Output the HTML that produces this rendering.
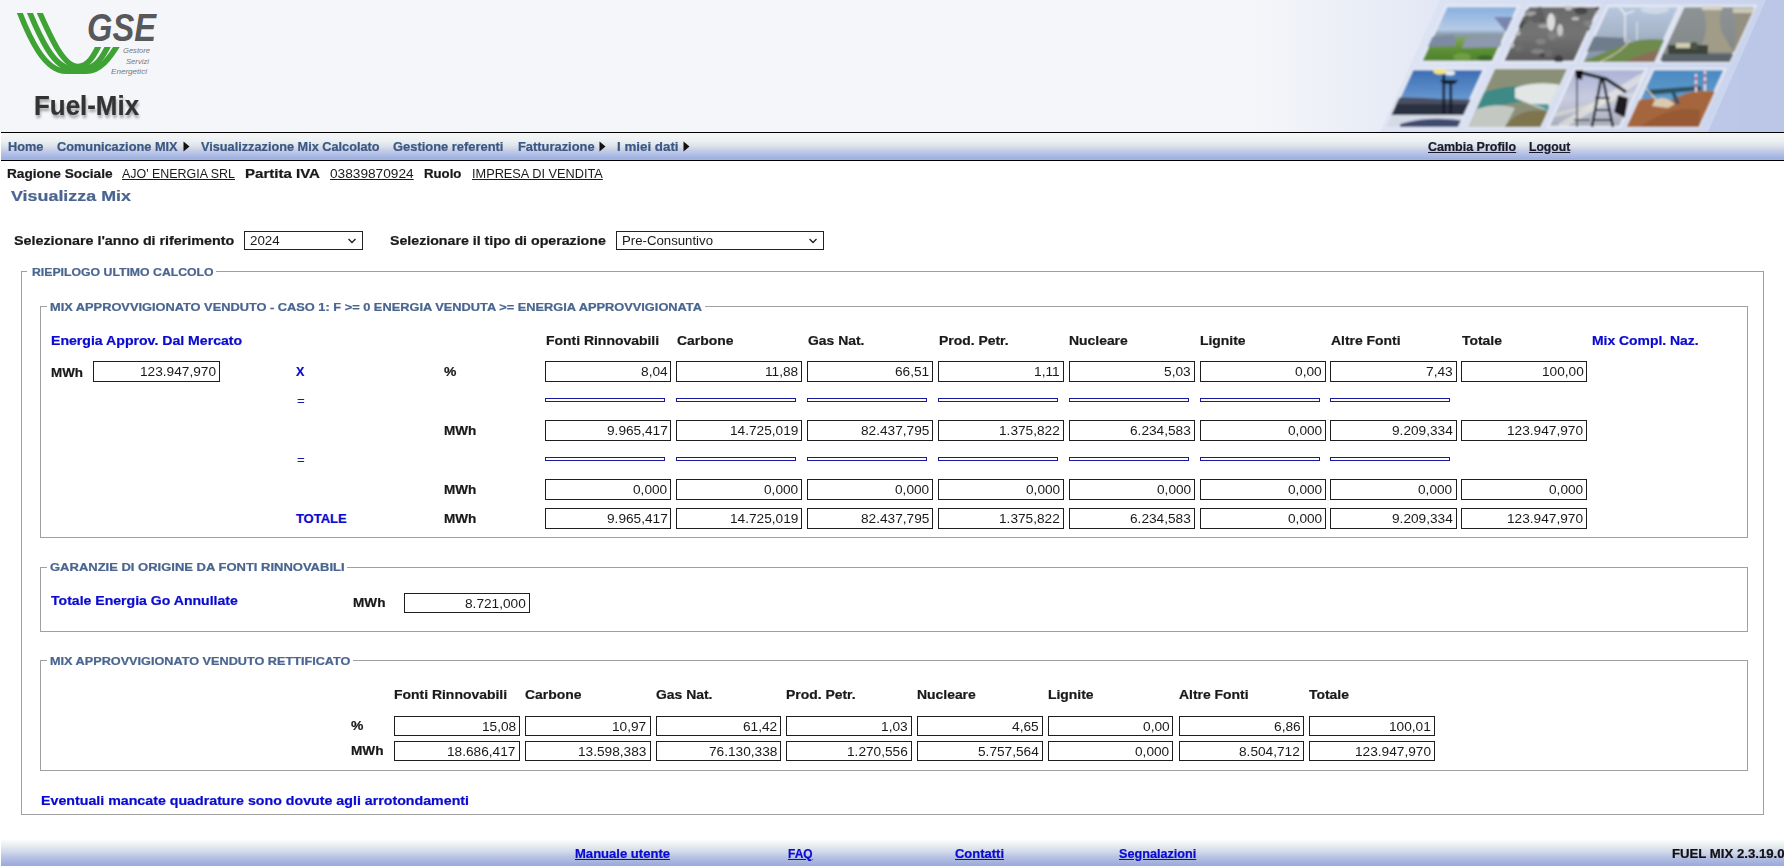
<!DOCTYPE html>
<html><head><meta charset="utf-8"><title>Fuel-Mix</title>
<style>
html,body{margin:0;padding:0;width:1784px;height:866px;overflow:hidden;background:#fff;}
body{position:relative;font-family:"Liberation Sans",sans-serif;}
.t{position:absolute;white-space:nowrap;font-weight:bold;-webkit-text-stroke:0.22px currentColor;}
</style></head><body>
<div style="position:absolute;left:0.00px;top:0.00px;width:1784.00px;height:132.00px;background:#f5f6fa;"></div>
<svg style="position:absolute;left:0;top:0" width="1784" height="132" viewBox="0 0 1784 132">
<defs>
<linearGradient id="hbg" x1="1250" y1="0" x2="1784" y2="0" gradientUnits="userSpaceOnUse"><stop offset="0" stop-color="#f5f6fa"/><stop offset="0.25" stop-color="#e8ecf6"/><stop offset="0.6" stop-color="#d4dcf0"/><stop offset="1" stop-color="#bac6e8"/></linearGradient>
<filter id="bl" x="-10%" y="-10%" width="120%" height="120%"><feGaussianBlur stdDeviation="0.9"/></filter>
<linearGradient id="g0" x1="0" y1="6.0" x2="0" y2="62.0" gradientUnits="userSpaceOnUse"><stop offset="0.00" stop-color="#86aede"/><stop offset="0.42" stop-color="#b6cbe6"/><stop offset="0.50" stop-color="#8e9cb4"/><stop offset="0.62" stop-color="#7aa04a"/><stop offset="0.80" stop-color="#5a8e34"/><stop offset="1.00" stop-color="#4f7e2e"/></linearGradient>
<linearGradient id="g1" x1="0" y1="6.0" x2="0" y2="62.0" gradientUnits="userSpaceOnUse"><stop offset="0.00" stop-color="#6a6a6a"/><stop offset="0.50" stop-color="#747474"/><stop offset="1.00" stop-color="#5a5a5a"/></linearGradient>
<linearGradient id="g2" x1="0" y1="6.0" x2="0" y2="62.0" gradientUnits="userSpaceOnUse"><stop offset="0.00" stop-color="#b8c8e0"/><stop offset="0.50" stop-color="#a6b4c8"/><stop offset="1.00" stop-color="#8090a0"/></linearGradient>
<linearGradient id="g3" x1="0" y1="6.0" x2="0" y2="62.0" gradientUnits="userSpaceOnUse"><stop offset="0.00" stop-color="#8e9496"/><stop offset="0.60" stop-color="#868c8c"/><stop offset="1.00" stop-color="#7a8080"/></linearGradient>
<linearGradient id="g4" x1="0" y1="69.0" x2="0" y2="127.0" gradientUnits="userSpaceOnUse"><stop offset="0.00" stop-color="#3a6cb2"/><stop offset="0.55" stop-color="#6a9ad2"/><stop offset="1.00" stop-color="#7aa4d4"/></linearGradient>
<linearGradient id="g5" x1="0" y1="69.0" x2="0" y2="127.0" gradientUnits="userSpaceOnUse"><stop offset="0.00" stop-color="#6c7468"/><stop offset="0.30" stop-color="#8a9282"/><stop offset="0.45" stop-color="#3e8a88"/><stop offset="0.60" stop-color="#d4dad6"/><stop offset="0.75" stop-color="#8a8c72"/><stop offset="1.00" stop-color="#6c7048"/></linearGradient>
<linearGradient id="g6" x1="0" y1="69.0" x2="0" y2="127.0" gradientUnits="userSpaceOnUse"><stop offset="0.00" stop-color="#aab2d4"/><stop offset="0.50" stop-color="#c8cce0"/><stop offset="1.00" stop-color="#a8acb8"/></linearGradient>
<linearGradient id="g7" x1="0" y1="69.0" x2="0" y2="127.0" gradientUnits="userSpaceOnUse"><stop offset="0.00" stop-color="#4a88c2"/><stop offset="0.60" stop-color="#62a0cc"/><stop offset="1.00" stop-color="#70a8d0"/></linearGradient>
<radialGradient id="coal" cx="1555" cy="30" r="30" gradientUnits="userSpaceOnUse"><stop offset="0" stop-color="#cfcfcf"/><stop offset="0.5" stop-color="#8a8a8a"/><stop offset="1" stop-color="#5a5a5a" stop-opacity="0"/></radialGradient>
<clipPath id="c0"><polygon points="1446.6,6.0 1518.6,6.0 1492.8,62.0 1420.8,62.0"/></clipPath>
<clipPath id="c1"><polygon points="1528.3,6.0 1600.3,6.0 1574.5,62.0 1502.5,62.0"/></clipPath>
<clipPath id="c2"><polygon points="1607.9,6.0 1679.9,6.0 1654.1,62.0 1582.1,62.0"/></clipPath>
<clipPath id="c3"><polygon points="1683.5,6.0 1755.5,6.0 1729.7,62.0 1657.7,62.0"/></clipPath>
<clipPath id="c4"><polygon points="1412.5,69.0 1484.5,69.0 1457.8,127.0 1385.8,127.0"/></clipPath>
<clipPath id="c5"><polygon points="1495.0,69.0 1567.0,69.0 1540.3,127.0 1468.3,127.0"/></clipPath>
<clipPath id="c6"><polygon points="1574.7,69.0 1646.7,69.0 1620.0,127.0 1548.0,127.0"/></clipPath>
<clipPath id="c7"><polygon points="1653.3,69.0 1725.3,69.0 1698.6,127.0 1626.6,127.0"/></clipPath>
</defs>
<rect x="1250" y="0" width="534" height="132" fill="url(#hbg)"/>
<polygon points="1440,0 1784,0 1784,132 1380,132" fill="#d6def2" opacity="0.5"/>
<polygon points="1766,0 1784,0 1784,132 1708,132" fill="#b6c2e6" opacity="0.7"/>
<g filter="url(#bl)">
<polygon points="1446.6,6.0 1518.6,6.0 1492.8,62.0 1420.8,62.0" fill="url(#g0)" stroke="#e4e8f4" stroke-width="2.5"/>
<polygon points="1528.3,6.0 1600.3,6.0 1574.5,62.0 1502.5,62.0" fill="url(#g1)" stroke="#e4e8f4" stroke-width="2.5"/>
<polygon points="1607.9,6.0 1679.9,6.0 1654.1,62.0 1582.1,62.0" fill="url(#g2)" stroke="#e4e8f4" stroke-width="2.5"/>
<polygon points="1683.5,6.0 1755.5,6.0 1729.7,62.0 1657.7,62.0" fill="url(#g3)" stroke="#e4e8f4" stroke-width="2.5"/>
<polygon points="1412.5,69.0 1484.5,69.0 1457.8,127.0 1385.8,127.0" fill="url(#g4)" stroke="#e4e8f4" stroke-width="2.5"/>
<polygon points="1495.0,69.0 1567.0,69.0 1540.3,127.0 1468.3,127.0" fill="url(#g5)" stroke="#e4e8f4" stroke-width="2.5"/>
<polygon points="1574.7,69.0 1646.7,69.0 1620.0,127.0 1548.0,127.0" fill="url(#g6)" stroke="#e4e8f4" stroke-width="2.5"/>
<polygon points="1653.3,69.0 1725.3,69.0 1698.6,127.0 1626.6,127.0" fill="url(#g7)" stroke="#e4e8f4" stroke-width="2.5"/>
<g clip-path="url(#c0)"><polygon points="1428,37 1454,35 1456,46 1424,47" fill="#7e8aa2"/><polygon points="1466,38 1500,36 1502,47 1462,48" fill="#8e98ae"/><polygon points="1494,17 1513,17 1506,32" fill="#7a86ae"/><ellipse cx="1462" cy="57" rx="9" ry="4" fill="#7aa84a" opacity="0.7"/><ellipse cx="1485" cy="58" rx="8" ry="3" fill="#2e5a20" opacity="0.6"/></g>
<g clip-path="url(#c1)"><ellipse cx="1535.8" cy="14.4" rx="2.4" ry="3.1" fill="rgb(60,60,60)"/><ellipse cx="1539.7" cy="9.2" rx="2.2" ry="2.8" fill="rgb(95,95,95)"/><ellipse cx="1511.6" cy="11.1" rx="2.3" ry="3.2" fill="rgb(160,160,160)"/><ellipse cx="1595.0" cy="41.3" rx="4.9" ry="2.7" fill="rgb(60,60,60)"/><ellipse cx="1597.7" cy="8.6" rx="3.4" ry="1.9" fill="rgb(80,80,80)"/><ellipse cx="1516.2" cy="23.3" rx="2.5" ry="3.2" fill="rgb(80,80,80)"/><ellipse cx="1522.8" cy="11.5" rx="4.8" ry="3.4" fill="rgb(70,70,70)"/><ellipse cx="1552.2" cy="35.8" rx="4.3" ry="4.3" fill="rgb(130,130,130)"/><ellipse cx="1539.4" cy="19.9" rx="5.5" ry="2.2" fill="rgb(80,80,80)"/><ellipse cx="1559.6" cy="35.4" rx="5.6" ry="2.4" fill="rgb(130,130,130)"/><ellipse cx="1598.1" cy="12.6" rx="2.8" ry="2.5" fill="rgb(160,160,160)"/><ellipse cx="1593.7" cy="29.6" rx="5.8" ry="3.2" fill="rgb(70,70,70)"/><ellipse cx="1588.2" cy="23.6" rx="5.0" ry="3.2" fill="rgb(130,130,130)"/><ellipse cx="1548.3" cy="53.0" rx="4.4" ry="3.5" fill="rgb(110,110,110)"/><ellipse cx="1510.8" cy="45.3" rx="3.4" ry="2.7" fill="rgb(190,190,190)"/><ellipse cx="1568.5" cy="7.3" rx="3.8" ry="3.3" fill="rgb(190,190,190)"/><ellipse cx="1551.9" cy="18.2" rx="2.6" ry="2.2" fill="rgb(110,110,110)"/><ellipse cx="1542.1" cy="54.8" rx="2.8" ry="2.7" fill="rgb(70,70,70)"/><ellipse cx="1531.4" cy="13.7" rx="6.3" ry="2.3" fill="rgb(160,160,160)"/><ellipse cx="1544.5" cy="26.1" rx="6.8" ry="2.0" fill="rgb(160,160,160)"/><ellipse cx="1521.7" cy="19.0" rx="2.1" ry="4.0" fill="rgb(95,95,95)"/><ellipse cx="1522.3" cy="21.8" rx="4.1" ry="2.6" fill="rgb(80,80,80)"/><ellipse cx="1558.8" cy="59.4" rx="4.3" ry="4.1" fill="rgb(60,60,60)"/><ellipse cx="1595.4" cy="44.1" rx="4.0" ry="2.7" fill="rgb(160,160,160)"/><ellipse cx="1550.7" cy="28.4" rx="2.3" ry="2.1" fill="rgb(95,95,95)"/><ellipse cx="1520.4" cy="25.0" rx="2.5" ry="3.2" fill="rgb(60,60,60)"/><ellipse cx="1556.0" cy="59.1" rx="2.4" ry="2.1" fill="rgb(60,60,60)"/><ellipse cx="1540.7" cy="41.5" rx="5.0" ry="2.9" fill="rgb(130,130,130)"/><ellipse cx="1516.0" cy="33.3" rx="4.4" ry="2.4" fill="rgb(190,190,190)"/><ellipse cx="1518.7" cy="48.0" rx="4.4" ry="3.6" fill="rgb(110,110,110)"/><ellipse cx="1554.1" cy="17.5" rx="2.7" ry="3.1" fill="rgb(130,130,130)"/><ellipse cx="1507.6" cy="35.6" rx="5.5" ry="2.3" fill="rgb(70,70,70)"/><ellipse cx="1539.8" cy="15.4" rx="4.7" ry="3.8" fill="rgb(95,95,95)"/><ellipse cx="1536.3" cy="18.5" rx="6.0" ry="4.0" fill="rgb(95,95,95)"/><ellipse cx="1575.3" cy="18.7" rx="3.8" ry="1.6" fill="rgb(190,190,190)"/><ellipse cx="1507.7" cy="21.6" rx="3.0" ry="3.3" fill="rgb(110,110,110)"/><ellipse cx="1537.7" cy="51.3" rx="6.8" ry="2.6" fill="rgb(130,130,130)"/><ellipse cx="1525.9" cy="18.7" rx="3.7" ry="2.9" fill="rgb(95,95,95)"/><ellipse cx="1598.6" cy="40.2" rx="4.4" ry="3.5" fill="rgb(60,60,60)"/><ellipse cx="1581.0" cy="10.7" rx="6.5" ry="3.8" fill="rgb(70,70,70)"/><ellipse cx="1551" cy="22" rx="4" ry="9" fill="#dcdcdc"/><ellipse cx="1560" cy="30" rx="3" ry="6" fill="#c8c8c8"/></g>
<g clip-path="url(#c2)"><ellipse cx="1655" cy="10" rx="14" ry="4" fill="#dfe6ee" opacity="0.6"/><polygon points="1580,36 1625,38 1625,50 1580,52" fill="#6e7c8c"/><path d="M1582,62 L1605,52 C1620,46 1630,42 1640,40 C1655,38 1668,40 1680,42 L1680,62 Z" fill="#6e8a4e"/><path d="M1625,62 C1645,52 1660,48 1680,50 L1680,62Z" fill="#8a6e5a"/><path d="M1600,62 C1615,55 1625,48 1630,40" stroke="#d8d0c0" stroke-width="1.2" fill="none"/></g>
<g clip-path="url(#c2)" stroke="#f4f6f8" stroke-width="1.2"><line x1="1625" y1="14" x2="1625" y2="42"/><line x1="1625" y1="14" x2="1620" y2="8"/><line x1="1625" y1="14" x2="1634" y2="11"/><line x1="1637" y1="22" x2="1637" y2="40" stroke-width="0.9"/></g>
<g clip-path="url(#c3)"><path d="M1703,7 L1721,7 C1719,18 1719,28 1724,36 C1728,42 1731,48 1733,52 L1699,52 C1702,44 1706,36 1706,28 C1706,20 1705,12 1703,7Z" fill="#a09c88"/><path d="M1734,11 L1755,11 C1752,22 1750,30 1750,38 C1750,44 1746,50 1745,52 L1731,52 C1734,44 1737,36 1736,28 C1736,20 1735,15 1734,11Z" fill="#948f7e"/><rect x="1702" y="5" width="20" height="5" fill="#d4d2c4"/><rect x="1733" y="8" width="22" height="5" fill="#ccc8b8"/><rect x="1668" y="45" width="40" height="9" fill="#3c443a"/><rect x="1676" y="43" width="14" height="5" fill="#d0ccb0"/><ellipse cx="1694" cy="46" rx="4" ry="4" fill="#4a5248"/><rect x="1662" y="54" width="80" height="8" fill="#5a646a"/></g>
<g clip-path="url(#c4)"><rect x="1380" y="100" width="110" height="15" fill="#2c3242"/><path d="M1380,100 C1400,96 1420,98 1440,99 L1490,100 L1490,104 L1380,104Z" fill="#4a5060"/><rect x="1380" y="115" width="110" height="13" fill="#d4dae6"/><path d="M1400,124 C1420,118 1445,117 1470,122 L1470,127 L1400,127Z" fill="#404c70"/><rect x="1442.5" y="74" width="2.6" height="40" fill="#141a26"/><rect x="1449.5" y="82" width="2.6" height="32" fill="#141a26"/><path d="M1440,80 L1458,80 L1455,84 L1443,84Z" fill="#141a26"/><ellipse cx="1440" cy="71" rx="7" ry="3.5" fill="#f0e488"/><ellipse cx="1450" cy="73" rx="5" ry="2.5" fill="#e8ecf0"/></g>
<g clip-path="url(#c5)"><rect x="1460" y="69" width="110" height="60" fill="#8a9078"/><path d="M1470,98 C1490,88 1515,84 1545,86 L1545,100 C1520,100 1495,106 1470,114Z" fill="#3e8a86"/><path d="M1515,88 C1530,82 1550,82 1565,86 L1560,112 C1545,112 1530,104 1515,98Z" fill="#e2e6e4"/><path d="M1469,112 C1490,104 1500,104 1515,108 L1505,127 L1469,127Z" fill="#c4c8c2"/><path d="M1505,127 C1515,112 1530,108 1550,112 L1545,127Z" fill="#7e7450"/><path d="M1530,104 C1540,106 1548,110 1552,114 L1548,104Z" fill="#4a9aa0"/></g>
<g clip-path="url(#c6)"><path d="M1560,127 L1650,72" stroke="#f4f2ea" stroke-width="7" opacity="0.55"/><path d="M1555,115 L1650,90" stroke="#e8e4d4" stroke-width="4" opacity="0.5"/><g fill="none" stroke="#111418"><path d="M1578,72 L1606,79 L1626,92" stroke-width="3.2"/><path d="M1601,79 L1592,127" stroke-width="2.4"/><path d="M1603,79 L1613,127" stroke-width="2.4"/><path d="M1595,98 L1610,98 M1594,110 L1611,110 M1593,120 L1612,120" stroke-width="1.3"/><path d="M1577,76 L1577,127" stroke-width="1"/><path d="M1574,120 L1590,120" stroke-width="1"/></g><path d="M1575,70 L1583,70 L1582,80 L1576,78Z" fill="#111"/><path d="M1618,95 L1628,98 L1625,118 L1614,112Z" fill="#1a1c22"/></g>
<g clip-path="url(#c7)"><path d="M1615,127 L1628,104 C1640,98 1655,96 1668,102 C1685,92 1700,88 1716,92 L1716,127Z" fill="#a6663e"/><path d="M1640,127 C1660,112 1680,106 1700,110 L1700,127Z" fill="#8e5230" opacity="0.6"/><path d="M1645,90 L1700,86 L1702,90 L1650,95Z" fill="#2e5060"/><path d="M1670,90 L1676,104 L1680,104 L1674,90Z" fill="#2e5060"/><path d="M1642,84 L1660,104 L1668,104" stroke="#d8d2c4" stroke-width="1.5" fill="none"/><path d="M1655,100 C1662,96 1668,98 1675,104 L1668,108 L1652,106Z" fill="#dccab0"/><rect x="1695" y="74" width="2" height="18" fill="#e8e0e0"/><rect x="1695" y="77" width="2" height="3" fill="#c84040"/><rect x="1695" y="84" width="2" height="3" fill="#c84040"/><rect x="1704" y="71" width="2" height="20" fill="#e8e0e0"/><rect x="1704" y="74" width="2" height="3" fill="#c84040"/><rect x="1704" y="81" width="2" height="3" fill="#c84040"/></g>
</g>
</svg>
<svg style="position:absolute;left:0;top:0" width="180" height="131" viewBox="0 0 180 131">
<defs><clipPath id="lc"><path d="M0,13 H86 V47 H180 V131 H0 Z"/></clipPath></defs>
<g fill="none" stroke="#3ea334" stroke-width="5.6" stroke-linecap="butt" clip-path="url(#lc)">
<path d="M17.5,7 C30,40 45,71.3 66,71.3 L 86,71.3 C 100,71.3 110,58 119.5,42"/>
<path d="M27.5,7 C40,38 54,68.5 72,68.5 L 84,68.5 C 96,68.5 103,57 110,42"/>
<path d="M37.2,7 C50,36 63,66.5 78,66.5 C 88,66.5 94,56 100.5,42"/>
</g>
<text x="87" y="40.5" font-family="Liberation Sans" font-weight="bold" font-style="italic" font-size="39" fill="#58585a" textLength="69" lengthAdjust="spacingAndGlyphs">GSE</text>
<text x="123" y="53" font-family="Liberation Sans" font-style="italic" font-size="7.5" fill="#777" textLength="27" lengthAdjust="spacingAndGlyphs">Gestore</text>
<text x="126" y="64" font-family="Liberation Sans" font-style="italic" font-size="7.5" fill="#777" textLength="23" lengthAdjust="spacingAndGlyphs">Servizi</text>
<text x="111" y="74" font-family="Liberation Sans" font-style="italic" font-size="7.5" fill="#777" textLength="36" lengthAdjust="spacingAndGlyphs">Energetici</text>
</svg>
<div class="t" style="top:91.64px;font-size:27.50px;line-height:27.50px;color:#333333;left:34.00px;transform:scaleX(0.9417);transform-origin:0 0;text-shadow:1px 3px 3px rgba(0,0,0,0.35);">Fuel-Mix</div>
<div style="position:absolute;left:1.00px;top:132.00px;width:1783.00px;height:1.00px;background:#000;"></div>
<div style="position:absolute;left:1.00px;top:133.00px;width:1783.00px;height:27.00px;background:linear-gradient(180deg,#f6f7f9 0%,#eef2f3 25%,#dce3ea 48%,#c4cce8 65%,#b0bee6 80%,#9cb0de 96%,#aab8e8 100%);"></div>
<div style="position:absolute;left:1.00px;top:160.00px;width:1783.00px;height:1.00px;background:#000;"></div>
<div class="t" style="top:139.94px;font-size:13.00px;line-height:13.00px;color:#3b5783;left:8.00px;transform:scaleX(0.9806);transform-origin:0 0;">Home</div>
<div class="t" style="top:139.94px;font-size:13.00px;line-height:13.00px;color:#3b5783;left:57.00px;transform:scaleX(0.9821);transform-origin:0 0;">Comunicazione MIX</div>
<div class="t" style="top:139.94px;font-size:13.00px;line-height:13.00px;color:#3b5783;left:200.80px;transform:scaleX(0.9781);transform-origin:0 0;">Visualizzazione Mix Calcolato</div>
<div class="t" style="top:139.94px;font-size:13.00px;line-height:13.00px;color:#3b5783;left:392.90px;transform:scaleX(0.9928);transform-origin:0 0;">Gestione referenti</div>
<div class="t" style="top:139.94px;font-size:13.00px;line-height:13.00px;color:#3b5783;left:517.60px;transform:scaleX(0.9909);transform-origin:0 0;">Fatturazione</div>
<div class="t" style="top:139.94px;font-size:13.00px;line-height:13.00px;color:#3b5783;left:617.40px;transform:scaleX(1.0267);transform-origin:0 0;">I miei dati</div>
<svg style="position:absolute;left:182.6px;top:141px" width="8" height="11"><path d="M0.5,0.5 L6.5,5.5 L0.5,10.5 Z" fill="#111"/></svg>
<svg style="position:absolute;left:599.3px;top:141px" width="8" height="11"><path d="M0.5,0.5 L6.5,5.5 L0.5,10.5 Z" fill="#111"/></svg>
<svg style="position:absolute;left:683.0px;top:141px" width="8" height="11"><path d="M0.5,0.5 L6.5,5.5 L0.5,10.5 Z" fill="#111"/></svg>
<div class="t" style="top:139.64px;font-size:13.00px;line-height:13.00px;color:#1a1a2a;text-decoration:underline;left:1427.80px;transform:scaleX(0.9607);transform-origin:0 0;">Cambia Profilo</div>
<div class="t" style="top:139.64px;font-size:13.00px;line-height:13.00px;color:#1a1a2a;text-decoration:underline;left:1528.80px;transform:scaleX(0.9364);transform-origin:0 0;">Logout</div>
<div class="t" style="top:166.74px;font-size:13.00px;line-height:13.00px;color:#1a1a1a;left:6.50px;transform:scaleX(1.0508);transform-origin:0 0;">Ragione Sociale</div>
<div class="t" style="top:166.74px;font-size:13.00px;line-height:13.00px;font-weight:normal;-webkit-text-stroke:0;color:#1a1a1a;text-decoration:underline;left:122.00px;transform:scaleX(0.9568);transform-origin:0 0;">AJO&#x27; ENERGIA SRL</div>
<div class="t" style="top:166.74px;font-size:13.00px;line-height:13.00px;color:#1a1a1a;left:245.00px;transform:scaleX(1.1574);transform-origin:0 0;">Partita IVA</div>
<div class="t" style="top:166.74px;font-size:13.00px;line-height:13.00px;font-weight:normal;-webkit-text-stroke:0;color:#1a1a1a;text-decoration:underline;left:330.00px;transform:scaleX(1.0516);transform-origin:0 0;">03839870924</div>
<div class="t" style="top:166.74px;font-size:13.00px;line-height:13.00px;color:#1a1a1a;left:424.30px;transform:scaleX(1.0163);transform-origin:0 0;">Ruolo</div>
<div class="t" style="top:166.74px;font-size:13.00px;line-height:13.00px;font-weight:normal;-webkit-text-stroke:0;color:#1a1a1a;text-decoration:underline;left:472.20px;transform:scaleX(0.9805);transform-origin:0 0;">IMPRESA DI VENDITA</div>
<div class="t" style="top:188.34px;font-size:15.50px;line-height:15.50px;color:#4a6590;left:11.00px;transform:scaleX(1.1538);transform-origin:0 0;">Visualizza Mix</div>
<div class="t" style="top:233.94px;font-size:13.00px;line-height:13.00px;color:#1a1a1a;left:14.10px;transform:scaleX(1.0994);transform-origin:0 0;">Selezionare l&#x27;anno di riferimento</div>
<div style="position:absolute;left:244.00px;top:231.00px;width:119.00px;height:19.00px;border:1px solid #222;box-sizing:border-box;background:#fff;"></div>
<div class="t" style="top:234.44px;font-size:13.00px;line-height:13.00px;font-weight:normal;-webkit-text-stroke:0;color:#1a1a1a;left:250.30px;transform:scaleX(1.0277);transform-origin:0 0;">2024</div>
<div class="t" style="top:233.94px;font-size:13.00px;line-height:13.00px;color:#1a1a1a;left:390.30px;transform:scaleX(1.0904);transform-origin:0 0;">Selezionare il tipo di operazione</div>
<div style="position:absolute;left:616.00px;top:231.00px;width:208.00px;height:19.00px;border:1px solid #222;box-sizing:border-box;background:#fff;"></div>
<div class="t" style="top:234.44px;font-size:13.00px;line-height:13.00px;font-weight:normal;-webkit-text-stroke:0;color:#1a1a1a;left:622.40px;transform:scaleX(1.0156);transform-origin:0 0;">Pre-Consuntivo</div>
<svg style="position:absolute;left:346.5px;top:237px" width="10" height="8"><path d="M1.5,2 L5,5.5 L8.5,2" fill="none" stroke="#222" stroke-width="1.4"/></svg>
<svg style="position:absolute;left:807.8px;top:237px" width="10" height="8"><path d="M1.5,2 L5,5.5 L8.5,2" fill="none" stroke="#222" stroke-width="1.4"/></svg>
<div style="position:absolute;left:21.00px;top:271.00px;width:1.00px;height:544.00px;background:#a0a0a0;"></div>
<div style="position:absolute;left:1763.00px;top:271.00px;width:1.00px;height:544.00px;background:#a0a0a0;"></div>
<div style="position:absolute;left:21.00px;top:814.00px;width:1743.00px;height:1.00px;background:#a0a0a0;"></div>
<div style="position:absolute;left:21.00px;top:271.00px;width:6.00px;height:1.00px;background:#a0a0a0;"></div>
<div style="position:absolute;left:216.00px;top:271.00px;width:1548.00px;height:1.00px;background:#a0a0a0;"></div>
<div class="t" style="top:267.46px;font-size:11.00px;line-height:11.00px;color:#4a6590;left:31.80px;transform:scaleX(1.1147);transform-origin:0 0;">RIEPILOGO ULTIMO CALCOLO</div>
<div style="position:absolute;left:40.00px;top:306.00px;width:1.00px;height:232.00px;background:#a0a0a0;"></div>
<div style="position:absolute;left:1747.00px;top:306.00px;width:1.00px;height:232.00px;background:#a0a0a0;"></div>
<div style="position:absolute;left:40.00px;top:537.00px;width:1708.00px;height:1.00px;background:#a0a0a0;"></div>
<div style="position:absolute;left:40.00px;top:306.00px;width:6.50px;height:1.00px;background:#a0a0a0;"></div>
<div style="position:absolute;left:705.00px;top:306.00px;width:1043.00px;height:1.00px;background:#a0a0a0;"></div>
<div class="t" style="top:301.66px;font-size:11.00px;line-height:11.00px;color:#4a6590;left:50.00px;transform:scaleX(1.1637);transform-origin:0 0;">MIX APPROVVIGIONATO VENDUTO - CASO 1: F &gt;= 0 ENERGIA VENDUTA &gt;= ENERGIA APPROVVIGIONATA</div>
<div style="position:absolute;left:40.00px;top:567.00px;width:1.00px;height:65.00px;background:#a0a0a0;"></div>
<div style="position:absolute;left:1747.00px;top:567.00px;width:1.00px;height:65.00px;background:#a0a0a0;"></div>
<div style="position:absolute;left:40.00px;top:631.00px;width:1708.00px;height:1.00px;background:#a0a0a0;"></div>
<div style="position:absolute;left:40.00px;top:567.00px;width:6.50px;height:1.00px;background:#a0a0a0;"></div>
<div style="position:absolute;left:347.00px;top:567.00px;width:1401.00px;height:1.00px;background:#a0a0a0;"></div>
<div class="t" style="top:562.26px;font-size:11.00px;line-height:11.00px;color:#4a6590;left:50.30px;transform:scaleX(1.1813);transform-origin:0 0;">GARANZIE DI ORIGINE DA FONTI RINNOVABILI</div>
<div style="position:absolute;left:40.00px;top:660.00px;width:1.00px;height:111.00px;background:#a0a0a0;"></div>
<div style="position:absolute;left:1747.00px;top:660.00px;width:1.00px;height:111.00px;background:#a0a0a0;"></div>
<div style="position:absolute;left:40.00px;top:770.00px;width:1708.00px;height:1.00px;background:#a0a0a0;"></div>
<div style="position:absolute;left:40.00px;top:660.00px;width:6.50px;height:1.00px;background:#a0a0a0;"></div>
<div style="position:absolute;left:353.00px;top:660.00px;width:1395.00px;height:1.00px;background:#a0a0a0;"></div>
<div class="t" style="top:656.36px;font-size:11.00px;line-height:11.00px;color:#4a6590;left:50.30px;transform:scaleX(1.1522);transform-origin:0 0;">MIX APPROVVIGIONATO VENDUTO RETTIFICATO</div>
<div class="t" style="top:334.14px;font-size:13.00px;line-height:13.00px;color:#0a0ad0;left:51.10px;transform:scaleX(1.0845);transform-origin:0 0;">Energia Approv. Dal Mercato</div>
<div class="t" style="top:333.94px;font-size:13.00px;line-height:13.00px;color:#1a1a1a;left:546.00px;transform:scaleX(1.0721);transform-origin:0 0;">Fonti Rinnovabili</div>
<div class="t" style="top:333.94px;font-size:13.00px;line-height:13.00px;color:#1a1a1a;left:676.85px;transform:scaleX(1.0700);transform-origin:0 0;">Carbone</div>
<div class="t" style="top:333.94px;font-size:13.00px;line-height:13.00px;color:#1a1a1a;left:807.70px;transform:scaleX(1.0700);transform-origin:0 0;">Gas Nat.</div>
<div class="t" style="top:333.94px;font-size:13.00px;line-height:13.00px;color:#1a1a1a;left:938.55px;transform:scaleX(1.0700);transform-origin:0 0;">Prod. Petr.</div>
<div class="t" style="top:333.94px;font-size:13.00px;line-height:13.00px;color:#1a1a1a;left:1069.40px;transform:scaleX(1.0700);transform-origin:0 0;">Nucleare</div>
<div class="t" style="top:333.94px;font-size:13.00px;line-height:13.00px;color:#1a1a1a;left:1200.25px;transform:scaleX(1.0700);transform-origin:0 0;">Lignite</div>
<div class="t" style="top:333.94px;font-size:13.00px;line-height:13.00px;color:#1a1a1a;left:1331.10px;transform:scaleX(1.0700);transform-origin:0 0;">Altre Fonti</div>
<div class="t" style="top:333.94px;font-size:13.00px;line-height:13.00px;color:#1a1a1a;left:1461.95px;transform:scaleX(1.0700);transform-origin:0 0;">Totale</div>
<div class="t" style="top:333.94px;font-size:13.00px;line-height:13.00px;color:#0a0ad0;left:1592.00px;transform:scaleX(1.0700);transform-origin:0 0;">Mix Compl. Naz.</div>
<div class="t" style="top:365.64px;font-size:13.00px;line-height:13.00px;color:#1a1a1a;left:51.10px;transform:scaleX(1.0290);transform-origin:0 0;">MWh</div>
<div style="position:absolute;left:93.00px;top:361.00px;width:127.00px;height:21.00px;border:1px solid #1e1e1e;box-sizing:border-box;background:#fff;"></div>
<div class="t" style="top:366.17px;font-size:12.20px;line-height:12.20px;font-weight:normal;-webkit-text-stroke:0;color:#1a1a1a;left:139.96px;transform:scaleX(1.1215);transform-origin:0 0;">123.947,970</div>
<div class="t" style="top:364.94px;font-size:13.00px;line-height:13.00px;color:#0a0ad0;left:295.80px;transform:scaleX(0.9655);transform-origin:0 0;">X</div>
<div class="t" style="top:364.94px;font-size:13.00px;line-height:13.00px;color:#1a1a1a;left:443.60px;transform:scaleX(1.0700);transform-origin:0 0;">%</div>
<div style="position:absolute;left:545.30px;top:361.00px;width:126.20px;height:21.00px;border:1px solid #1e1e1e;box-sizing:border-box;background:#fff;"></div>
<div class="t" style="top:366.17px;font-size:12.20px;line-height:12.20px;font-weight:normal;-webkit-text-stroke:0;color:#1a1a1a;left:640.82px;transform:scaleX(1.1256);transform-origin:0 0;">8,04</div>
<div style="position:absolute;left:545.30px;top:420.00px;width:126.20px;height:21.00px;border:1px solid #1e1e1e;box-sizing:border-box;background:#fff;"></div>
<div class="t" style="top:425.17px;font-size:12.20px;line-height:12.20px;font-weight:normal;-webkit-text-stroke:0;color:#1a1a1a;left:606.62px;transform:scaleX(1.1211);transform-origin:0 0;">9.965,417</div>
<div style="position:absolute;left:545.30px;top:479.00px;width:126.20px;height:20.50px;border:1px solid #1e1e1e;box-sizing:border-box;background:#fff;"></div>
<div class="t" style="top:483.92px;font-size:12.20px;line-height:12.20px;font-weight:normal;-webkit-text-stroke:0;color:#1a1a1a;left:633.30px;transform:scaleX(1.1213);transform-origin:0 0;">0,000</div>
<div style="position:absolute;left:545.30px;top:508.00px;width:126.20px;height:21.00px;border:1px solid #1e1e1e;box-sizing:border-box;background:#fff;"></div>
<div class="t" style="top:513.17px;font-size:12.20px;line-height:12.20px;font-weight:normal;-webkit-text-stroke:0;color:#1a1a1a;left:606.62px;transform:scaleX(1.1211);transform-origin:0 0;">9.965,417</div>
<div style="position:absolute;left:676.15px;top:361.00px;width:126.20px;height:21.00px;border:1px solid #1e1e1e;box-sizing:border-box;background:#fff;"></div>
<div class="t" style="top:366.17px;font-size:12.20px;line-height:12.20px;font-weight:normal;-webkit-text-stroke:0;color:#1a1a1a;left:765.18px;transform:scaleX(1.1207);transform-origin:0 0;">11,88</div>
<div style="position:absolute;left:676.15px;top:420.00px;width:126.20px;height:21.00px;border:1px solid #1e1e1e;box-sizing:border-box;background:#fff;"></div>
<div class="t" style="top:425.17px;font-size:12.20px;line-height:12.20px;font-weight:normal;-webkit-text-stroke:0;color:#1a1a1a;left:729.84px;transform:scaleX(1.1213);transform-origin:0 0;">14.725,019</div>
<div style="position:absolute;left:676.15px;top:479.00px;width:126.20px;height:20.50px;border:1px solid #1e1e1e;box-sizing:border-box;background:#fff;"></div>
<div class="t" style="top:483.92px;font-size:12.20px;line-height:12.20px;font-weight:normal;-webkit-text-stroke:0;color:#1a1a1a;left:764.15px;transform:scaleX(1.1213);transform-origin:0 0;">0,000</div>
<div style="position:absolute;left:676.15px;top:508.00px;width:126.20px;height:21.00px;border:1px solid #1e1e1e;box-sizing:border-box;background:#fff;"></div>
<div class="t" style="top:513.17px;font-size:12.20px;line-height:12.20px;font-weight:normal;-webkit-text-stroke:0;color:#1a1a1a;left:729.84px;transform:scaleX(1.1213);transform-origin:0 0;">14.725,019</div>
<div style="position:absolute;left:807.00px;top:361.00px;width:126.20px;height:21.00px;border:1px solid #1e1e1e;box-sizing:border-box;background:#fff;"></div>
<div class="t" style="top:366.17px;font-size:12.20px;line-height:12.20px;font-weight:normal;-webkit-text-stroke:0;color:#1a1a1a;left:895.00px;transform:scaleX(1.1213);transform-origin:0 0;">66,51</div>
<div style="position:absolute;left:807.00px;top:420.00px;width:126.20px;height:21.00px;border:1px solid #1e1e1e;box-sizing:border-box;background:#fff;"></div>
<div class="t" style="top:425.17px;font-size:12.20px;line-height:12.20px;font-weight:normal;-webkit-text-stroke:0;color:#1a1a1a;left:860.69px;transform:scaleX(1.1213);transform-origin:0 0;">82.437,795</div>
<div style="position:absolute;left:807.00px;top:479.00px;width:126.20px;height:20.50px;border:1px solid #1e1e1e;box-sizing:border-box;background:#fff;"></div>
<div class="t" style="top:483.92px;font-size:12.20px;line-height:12.20px;font-weight:normal;-webkit-text-stroke:0;color:#1a1a1a;left:895.00px;transform:scaleX(1.1213);transform-origin:0 0;">0,000</div>
<div style="position:absolute;left:807.00px;top:508.00px;width:126.20px;height:21.00px;border:1px solid #1e1e1e;box-sizing:border-box;background:#fff;"></div>
<div class="t" style="top:513.17px;font-size:12.20px;line-height:12.20px;font-weight:normal;-webkit-text-stroke:0;color:#1a1a1a;left:860.69px;transform:scaleX(1.1213);transform-origin:0 0;">82.437,795</div>
<div style="position:absolute;left:937.85px;top:361.00px;width:126.20px;height:21.00px;border:1px solid #1e1e1e;box-sizing:border-box;background:#fff;"></div>
<div class="t" style="top:366.17px;font-size:12.20px;line-height:12.20px;font-weight:normal;-webkit-text-stroke:0;color:#1a1a1a;left:1034.40px;transform:scaleX(1.1250);transform-origin:0 0;">1,11</div>
<div style="position:absolute;left:937.85px;top:420.00px;width:126.20px;height:21.00px;border:1px solid #1e1e1e;box-sizing:border-box;background:#fff;"></div>
<div class="t" style="top:425.17px;font-size:12.20px;line-height:12.20px;font-weight:normal;-webkit-text-stroke:0;color:#1a1a1a;left:999.17px;transform:scaleX(1.1211);transform-origin:0 0;">1.375,822</div>
<div style="position:absolute;left:937.85px;top:479.00px;width:126.20px;height:20.50px;border:1px solid #1e1e1e;box-sizing:border-box;background:#fff;"></div>
<div class="t" style="top:483.92px;font-size:12.20px;line-height:12.20px;font-weight:normal;-webkit-text-stroke:0;color:#1a1a1a;left:1025.85px;transform:scaleX(1.1213);transform-origin:0 0;">0,000</div>
<div style="position:absolute;left:937.85px;top:508.00px;width:126.20px;height:21.00px;border:1px solid #1e1e1e;box-sizing:border-box;background:#fff;"></div>
<div class="t" style="top:513.17px;font-size:12.20px;line-height:12.20px;font-weight:normal;-webkit-text-stroke:0;color:#1a1a1a;left:999.17px;transform:scaleX(1.1211);transform-origin:0 0;">1.375,822</div>
<div style="position:absolute;left:1068.70px;top:361.00px;width:126.20px;height:21.00px;border:1px solid #1e1e1e;box-sizing:border-box;background:#fff;"></div>
<div class="t" style="top:366.17px;font-size:12.20px;line-height:12.20px;font-weight:normal;-webkit-text-stroke:0;color:#1a1a1a;left:1164.22px;transform:scaleX(1.1256);transform-origin:0 0;">5,03</div>
<div style="position:absolute;left:1068.70px;top:420.00px;width:126.20px;height:21.00px;border:1px solid #1e1e1e;box-sizing:border-box;background:#fff;"></div>
<div class="t" style="top:425.17px;font-size:12.20px;line-height:12.20px;font-weight:normal;-webkit-text-stroke:0;color:#1a1a1a;left:1130.02px;transform:scaleX(1.1211);transform-origin:0 0;">6.234,583</div>
<div style="position:absolute;left:1068.70px;top:479.00px;width:126.20px;height:20.50px;border:1px solid #1e1e1e;box-sizing:border-box;background:#fff;"></div>
<div class="t" style="top:483.92px;font-size:12.20px;line-height:12.20px;font-weight:normal;-webkit-text-stroke:0;color:#1a1a1a;left:1156.70px;transform:scaleX(1.1213);transform-origin:0 0;">0,000</div>
<div style="position:absolute;left:1068.70px;top:508.00px;width:126.20px;height:21.00px;border:1px solid #1e1e1e;box-sizing:border-box;background:#fff;"></div>
<div class="t" style="top:513.17px;font-size:12.20px;line-height:12.20px;font-weight:normal;-webkit-text-stroke:0;color:#1a1a1a;left:1130.02px;transform:scaleX(1.1211);transform-origin:0 0;">6.234,583</div>
<div style="position:absolute;left:1199.55px;top:361.00px;width:126.20px;height:21.00px;border:1px solid #1e1e1e;box-sizing:border-box;background:#fff;"></div>
<div class="t" style="top:366.17px;font-size:12.20px;line-height:12.20px;font-weight:normal;-webkit-text-stroke:0;color:#1a1a1a;left:1295.07px;transform:scaleX(1.1256);transform-origin:0 0;">0,00</div>
<div style="position:absolute;left:1199.55px;top:420.00px;width:126.20px;height:21.00px;border:1px solid #1e1e1e;box-sizing:border-box;background:#fff;"></div>
<div class="t" style="top:425.17px;font-size:12.20px;line-height:12.20px;font-weight:normal;-webkit-text-stroke:0;color:#1a1a1a;left:1287.55px;transform:scaleX(1.1213);transform-origin:0 0;">0,000</div>
<div style="position:absolute;left:1199.55px;top:479.00px;width:126.20px;height:20.50px;border:1px solid #1e1e1e;box-sizing:border-box;background:#fff;"></div>
<div class="t" style="top:483.92px;font-size:12.20px;line-height:12.20px;font-weight:normal;-webkit-text-stroke:0;color:#1a1a1a;left:1287.55px;transform:scaleX(1.1213);transform-origin:0 0;">0,000</div>
<div style="position:absolute;left:1199.55px;top:508.00px;width:126.20px;height:21.00px;border:1px solid #1e1e1e;box-sizing:border-box;background:#fff;"></div>
<div class="t" style="top:513.17px;font-size:12.20px;line-height:12.20px;font-weight:normal;-webkit-text-stroke:0;color:#1a1a1a;left:1287.55px;transform:scaleX(1.1213);transform-origin:0 0;">0,000</div>
<div style="position:absolute;left:1330.40px;top:361.00px;width:126.20px;height:21.00px;border:1px solid #1e1e1e;box-sizing:border-box;background:#fff;"></div>
<div class="t" style="top:366.17px;font-size:12.20px;line-height:12.20px;font-weight:normal;-webkit-text-stroke:0;color:#1a1a1a;left:1425.92px;transform:scaleX(1.1256);transform-origin:0 0;">7,43</div>
<div style="position:absolute;left:1330.40px;top:420.00px;width:126.20px;height:21.00px;border:1px solid #1e1e1e;box-sizing:border-box;background:#fff;"></div>
<div class="t" style="top:425.17px;font-size:12.20px;line-height:12.20px;font-weight:normal;-webkit-text-stroke:0;color:#1a1a1a;left:1391.72px;transform:scaleX(1.1211);transform-origin:0 0;">9.209,334</div>
<div style="position:absolute;left:1330.40px;top:479.00px;width:126.20px;height:20.50px;border:1px solid #1e1e1e;box-sizing:border-box;background:#fff;"></div>
<div class="t" style="top:483.92px;font-size:12.20px;line-height:12.20px;font-weight:normal;-webkit-text-stroke:0;color:#1a1a1a;left:1418.40px;transform:scaleX(1.1213);transform-origin:0 0;">0,000</div>
<div style="position:absolute;left:1330.40px;top:508.00px;width:126.20px;height:21.00px;border:1px solid #1e1e1e;box-sizing:border-box;background:#fff;"></div>
<div class="t" style="top:513.17px;font-size:12.20px;line-height:12.20px;font-weight:normal;-webkit-text-stroke:0;color:#1a1a1a;left:1391.72px;transform:scaleX(1.1211);transform-origin:0 0;">9.209,334</div>
<div style="position:absolute;left:1461.25px;top:361.00px;width:126.20px;height:21.00px;border:1px solid #1e1e1e;box-sizing:border-box;background:#fff;"></div>
<div class="t" style="top:366.17px;font-size:12.20px;line-height:12.20px;font-weight:normal;-webkit-text-stroke:0;color:#1a1a1a;left:1541.61px;transform:scaleX(1.1217);transform-origin:0 0;">100,00</div>
<div style="position:absolute;left:1461.25px;top:420.00px;width:126.20px;height:21.00px;border:1px solid #1e1e1e;box-sizing:border-box;background:#fff;"></div>
<div class="t" style="top:425.17px;font-size:12.20px;line-height:12.20px;font-weight:normal;-webkit-text-stroke:0;color:#1a1a1a;left:1507.41px;transform:scaleX(1.1215);transform-origin:0 0;">123.947,970</div>
<div style="position:absolute;left:1461.25px;top:479.00px;width:126.20px;height:20.50px;border:1px solid #1e1e1e;box-sizing:border-box;background:#fff;"></div>
<div class="t" style="top:483.92px;font-size:12.20px;line-height:12.20px;font-weight:normal;-webkit-text-stroke:0;color:#1a1a1a;left:1549.25px;transform:scaleX(1.1213);transform-origin:0 0;">0,000</div>
<div style="position:absolute;left:1461.25px;top:508.00px;width:126.20px;height:21.00px;border:1px solid #1e1e1e;box-sizing:border-box;background:#fff;"></div>
<div class="t" style="top:513.17px;font-size:12.20px;line-height:12.20px;font-weight:normal;-webkit-text-stroke:0;color:#1a1a1a;left:1507.41px;transform:scaleX(1.1215);transform-origin:0 0;">123.947,970</div>
<div style="position:absolute;left:545.30px;top:398.00px;width:120.00px;height:4.20px;border:1px solid #1a1aa0;box-sizing:border-box;"></div>
<div style="position:absolute;left:676.15px;top:398.00px;width:120.00px;height:4.20px;border:1px solid #1a1aa0;box-sizing:border-box;"></div>
<div style="position:absolute;left:807.00px;top:398.00px;width:120.00px;height:4.20px;border:1px solid #1a1aa0;box-sizing:border-box;"></div>
<div style="position:absolute;left:937.85px;top:398.00px;width:120.00px;height:4.20px;border:1px solid #1a1aa0;box-sizing:border-box;"></div>
<div style="position:absolute;left:1068.70px;top:398.00px;width:120.00px;height:4.20px;border:1px solid #1a1aa0;box-sizing:border-box;"></div>
<div style="position:absolute;left:1199.55px;top:398.00px;width:120.00px;height:4.20px;border:1px solid #1a1aa0;box-sizing:border-box;"></div>
<div style="position:absolute;left:1330.40px;top:398.00px;width:120.00px;height:4.20px;border:1px solid #1a1aa0;box-sizing:border-box;"></div>
<div class="t" style="top:394.34px;font-size:13.00px;line-height:13.00px;font-weight:normal;-webkit-text-stroke:0;color:#1a1aa8;left:296.80px;transform:scaleX(1.0263);transform-origin:0 0;">=</div>
<div style="position:absolute;left:545.30px;top:456.50px;width:120.00px;height:4.20px;border:1px solid #1a1aa0;box-sizing:border-box;"></div>
<div style="position:absolute;left:676.15px;top:456.50px;width:120.00px;height:4.20px;border:1px solid #1a1aa0;box-sizing:border-box;"></div>
<div style="position:absolute;left:807.00px;top:456.50px;width:120.00px;height:4.20px;border:1px solid #1a1aa0;box-sizing:border-box;"></div>
<div style="position:absolute;left:937.85px;top:456.50px;width:120.00px;height:4.20px;border:1px solid #1a1aa0;box-sizing:border-box;"></div>
<div style="position:absolute;left:1068.70px;top:456.50px;width:120.00px;height:4.20px;border:1px solid #1a1aa0;box-sizing:border-box;"></div>
<div style="position:absolute;left:1199.55px;top:456.50px;width:120.00px;height:4.20px;border:1px solid #1a1aa0;box-sizing:border-box;"></div>
<div style="position:absolute;left:1330.40px;top:456.50px;width:120.00px;height:4.20px;border:1px solid #1a1aa0;box-sizing:border-box;"></div>
<div class="t" style="top:452.84px;font-size:13.00px;line-height:13.00px;font-weight:normal;-webkit-text-stroke:0;color:#1a1aa8;left:296.80px;transform:scaleX(1.0263);transform-origin:0 0;">=</div>
<div class="t" style="top:424.14px;font-size:13.00px;line-height:13.00px;color:#1a1a1a;left:443.70px;transform:scaleX(1.0419);transform-origin:0 0;">MWh</div>
<div class="t" style="top:482.94px;font-size:13.00px;line-height:13.00px;color:#1a1a1a;left:443.70px;transform:scaleX(1.0419);transform-origin:0 0;">MWh</div>
<div class="t" style="top:511.94px;font-size:13.00px;line-height:13.00px;color:#1a1a1a;left:443.70px;transform:scaleX(1.0419);transform-origin:0 0;">MWh</div>
<div class="t" style="top:511.94px;font-size:13.00px;line-height:13.00px;color:#0a0ad0;left:295.90px;transform:scaleX(1.0000);transform-origin:0 0;">TOTALE</div>
<div class="t" style="top:594.24px;font-size:13.00px;line-height:13.00px;color:#0a0ad0;left:51.20px;transform:scaleX(1.0823);transform-origin:0 0;">Totale Energia Go Annullate</div>
<div class="t" style="top:596.34px;font-size:13.00px;line-height:13.00px;color:#1a1a1a;left:353.00px;transform:scaleX(1.0452);transform-origin:0 0;">MWh</div>
<div style="position:absolute;left:403.80px;top:593.30px;width:126.50px;height:20.00px;border:1px solid #1e1e1e;box-sizing:border-box;background:#fff;"></div>
<div class="t" style="top:597.97px;font-size:12.20px;line-height:12.20px;font-weight:normal;-webkit-text-stroke:0;color:#1a1a1a;left:465.42px;transform:scaleX(1.1211);transform-origin:0 0;">8.721,000</div>
<div class="t" style="top:687.74px;font-size:13.00px;line-height:13.00px;color:#1a1a1a;left:394.20px;transform:scaleX(1.0721);transform-origin:0 0;">Fonti Rinnovabili</div>
<div class="t" style="top:687.74px;font-size:13.00px;line-height:13.00px;color:#1a1a1a;left:524.92px;transform:scaleX(1.0700);transform-origin:0 0;">Carbone</div>
<div class="t" style="top:687.74px;font-size:13.00px;line-height:13.00px;color:#1a1a1a;left:655.64px;transform:scaleX(1.0700);transform-origin:0 0;">Gas Nat.</div>
<div class="t" style="top:687.74px;font-size:13.00px;line-height:13.00px;color:#1a1a1a;left:786.36px;transform:scaleX(1.0700);transform-origin:0 0;">Prod. Petr.</div>
<div class="t" style="top:687.74px;font-size:13.00px;line-height:13.00px;color:#1a1a1a;left:917.08px;transform:scaleX(1.0700);transform-origin:0 0;">Nucleare</div>
<div class="t" style="top:687.74px;font-size:13.00px;line-height:13.00px;color:#1a1a1a;left:1047.80px;transform:scaleX(1.0700);transform-origin:0 0;">Lignite</div>
<div class="t" style="top:687.74px;font-size:13.00px;line-height:13.00px;color:#1a1a1a;left:1178.52px;transform:scaleX(1.0700);transform-origin:0 0;">Altre Fonti</div>
<div class="t" style="top:687.74px;font-size:13.00px;line-height:13.00px;color:#1a1a1a;left:1309.24px;transform:scaleX(1.0700);transform-origin:0 0;">Totale</div>
<div class="t" style="top:718.94px;font-size:13.00px;line-height:13.00px;color:#1a1a1a;left:351.00px;transform:scaleX(1.0700);transform-origin:0 0;">%</div>
<div class="t" style="top:744.34px;font-size:13.00px;line-height:13.00px;color:#1a1a1a;left:351.00px;transform:scaleX(1.0484);transform-origin:0 0;">MWh</div>
<div style="position:absolute;left:394.20px;top:716.00px;width:125.70px;height:20.00px;border:1px solid #1e1e1e;box-sizing:border-box;background:#fff;"></div>
<div class="t" style="top:720.67px;font-size:12.20px;line-height:12.20px;font-weight:normal;-webkit-text-stroke:0;color:#1a1a1a;left:481.70px;transform:scaleX(1.1213);transform-origin:0 0;">15,08</div>
<div style="position:absolute;left:394.20px;top:741.00px;width:125.70px;height:20.00px;border:1px solid #1e1e1e;box-sizing:border-box;background:#fff;"></div>
<div class="t" style="top:745.67px;font-size:12.20px;line-height:12.20px;font-weight:normal;-webkit-text-stroke:0;color:#1a1a1a;left:447.39px;transform:scaleX(1.1213);transform-origin:0 0;">18.686,417</div>
<div style="position:absolute;left:524.92px;top:716.00px;width:125.70px;height:20.00px;border:1px solid #1e1e1e;box-sizing:border-box;background:#fff;"></div>
<div class="t" style="top:720.67px;font-size:12.20px;line-height:12.20px;font-weight:normal;-webkit-text-stroke:0;color:#1a1a1a;left:612.42px;transform:scaleX(1.1213);transform-origin:0 0;">10,97</div>
<div style="position:absolute;left:524.92px;top:741.00px;width:125.70px;height:20.00px;border:1px solid #1e1e1e;box-sizing:border-box;background:#fff;"></div>
<div class="t" style="top:745.67px;font-size:12.20px;line-height:12.20px;font-weight:normal;-webkit-text-stroke:0;color:#1a1a1a;left:578.11px;transform:scaleX(1.1213);transform-origin:0 0;">13.598,383</div>
<div style="position:absolute;left:655.64px;top:716.00px;width:125.70px;height:20.00px;border:1px solid #1e1e1e;box-sizing:border-box;background:#fff;"></div>
<div class="t" style="top:720.67px;font-size:12.20px;line-height:12.20px;font-weight:normal;-webkit-text-stroke:0;color:#1a1a1a;left:743.14px;transform:scaleX(1.1213);transform-origin:0 0;">61,42</div>
<div style="position:absolute;left:655.64px;top:741.00px;width:125.70px;height:20.00px;border:1px solid #1e1e1e;box-sizing:border-box;background:#fff;"></div>
<div class="t" style="top:745.67px;font-size:12.20px;line-height:12.20px;font-weight:normal;-webkit-text-stroke:0;color:#1a1a1a;left:708.83px;transform:scaleX(1.1213);transform-origin:0 0;">76.130,338</div>
<div style="position:absolute;left:786.36px;top:716.00px;width:125.70px;height:20.00px;border:1px solid #1e1e1e;box-sizing:border-box;background:#fff;"></div>
<div class="t" style="top:720.67px;font-size:12.20px;line-height:12.20px;font-weight:normal;-webkit-text-stroke:0;color:#1a1a1a;left:881.38px;transform:scaleX(1.1256);transform-origin:0 0;">1,03</div>
<div style="position:absolute;left:786.36px;top:741.00px;width:125.70px;height:20.00px;border:1px solid #1e1e1e;box-sizing:border-box;background:#fff;"></div>
<div class="t" style="top:745.67px;font-size:12.20px;line-height:12.20px;font-weight:normal;-webkit-text-stroke:0;color:#1a1a1a;left:847.18px;transform:scaleX(1.1211);transform-origin:0 0;">1.270,556</div>
<div style="position:absolute;left:917.08px;top:716.00px;width:125.70px;height:20.00px;border:1px solid #1e1e1e;box-sizing:border-box;background:#fff;"></div>
<div class="t" style="top:720.67px;font-size:12.20px;line-height:12.20px;font-weight:normal;-webkit-text-stroke:0;color:#1a1a1a;left:1012.10px;transform:scaleX(1.1256);transform-origin:0 0;">4,65</div>
<div style="position:absolute;left:917.08px;top:741.00px;width:125.70px;height:20.00px;border:1px solid #1e1e1e;box-sizing:border-box;background:#fff;"></div>
<div class="t" style="top:745.67px;font-size:12.20px;line-height:12.20px;font-weight:normal;-webkit-text-stroke:0;color:#1a1a1a;left:977.90px;transform:scaleX(1.1211);transform-origin:0 0;">5.757,564</div>
<div style="position:absolute;left:1047.80px;top:716.00px;width:125.70px;height:20.00px;border:1px solid #1e1e1e;box-sizing:border-box;background:#fff;"></div>
<div class="t" style="top:720.67px;font-size:12.20px;line-height:12.20px;font-weight:normal;-webkit-text-stroke:0;color:#1a1a1a;left:1142.82px;transform:scaleX(1.1256);transform-origin:0 0;">0,00</div>
<div style="position:absolute;left:1047.80px;top:741.00px;width:125.70px;height:20.00px;border:1px solid #1e1e1e;box-sizing:border-box;background:#fff;"></div>
<div class="t" style="top:745.67px;font-size:12.20px;line-height:12.20px;font-weight:normal;-webkit-text-stroke:0;color:#1a1a1a;left:1135.30px;transform:scaleX(1.1213);transform-origin:0 0;">0,000</div>
<div style="position:absolute;left:1178.52px;top:716.00px;width:125.70px;height:20.00px;border:1px solid #1e1e1e;box-sizing:border-box;background:#fff;"></div>
<div class="t" style="top:720.67px;font-size:12.20px;line-height:12.20px;font-weight:normal;-webkit-text-stroke:0;color:#1a1a1a;left:1273.54px;transform:scaleX(1.1256);transform-origin:0 0;">6,86</div>
<div style="position:absolute;left:1178.52px;top:741.00px;width:125.70px;height:20.00px;border:1px solid #1e1e1e;box-sizing:border-box;background:#fff;"></div>
<div class="t" style="top:745.67px;font-size:12.20px;line-height:12.20px;font-weight:normal;-webkit-text-stroke:0;color:#1a1a1a;left:1239.34px;transform:scaleX(1.1211);transform-origin:0 0;">8.504,712</div>
<div style="position:absolute;left:1309.24px;top:716.00px;width:125.70px;height:20.00px;border:1px solid #1e1e1e;box-sizing:border-box;background:#fff;"></div>
<div class="t" style="top:720.67px;font-size:12.20px;line-height:12.20px;font-weight:normal;-webkit-text-stroke:0;color:#1a1a1a;left:1389.10px;transform:scaleX(1.1217);transform-origin:0 0;">100,01</div>
<div style="position:absolute;left:1309.24px;top:741.00px;width:125.70px;height:20.00px;border:1px solid #1e1e1e;box-sizing:border-box;background:#fff;"></div>
<div class="t" style="top:745.67px;font-size:12.20px;line-height:12.20px;font-weight:normal;-webkit-text-stroke:0;color:#1a1a1a;left:1354.90px;transform:scaleX(1.1215);transform-origin:0 0;">123.947,970</div>
<div class="t" style="top:794.24px;font-size:13.00px;line-height:13.00px;color:#0a0ad0;left:40.60px;transform:scaleX(1.0932);transform-origin:0 0;">Eventuali mancate quadrature sono dovute agli arrotondamenti</div>
<div style="position:absolute;left:1.00px;top:839.00px;width:1783.00px;height:27.00px;background:linear-gradient(180deg,#ffffff 0%,#e6ecee 26%,#d0d8ea 48%,#b4c0e4 70%,#98a8d8 100%);"></div>
<div class="t" style="top:846.74px;font-size:13.00px;line-height:13.00px;color:#0a0ad0;text-decoration:underline;left:575.10px;transform:scaleX(1.0042);transform-origin:0 0;">Manuale utente</div>
<div class="t" style="top:846.74px;font-size:13.00px;line-height:13.00px;color:#0a0ad0;text-decoration:underline;left:788.20px;transform:scaleX(0.9176);transform-origin:0 0;">FAQ</div>
<div class="t" style="top:846.74px;font-size:13.00px;line-height:13.00px;color:#0a0ad0;text-decoration:underline;left:954.70px;transform:scaleX(0.9980);transform-origin:0 0;">Contatti</div>
<div class="t" style="top:846.74px;font-size:13.00px;line-height:13.00px;color:#0a0ad0;text-decoration:underline;left:1118.70px;transform:scaleX(0.9723);transform-origin:0 0;">Segnalazioni</div>
<div class="t" style="top:846.94px;font-size:13.00px;line-height:13.00px;color:#111;left:1671.70px;transform:scaleX(1.0135);transform-origin:0 0;">FUEL MIX 2.3.19.0</div>
</body></html>
